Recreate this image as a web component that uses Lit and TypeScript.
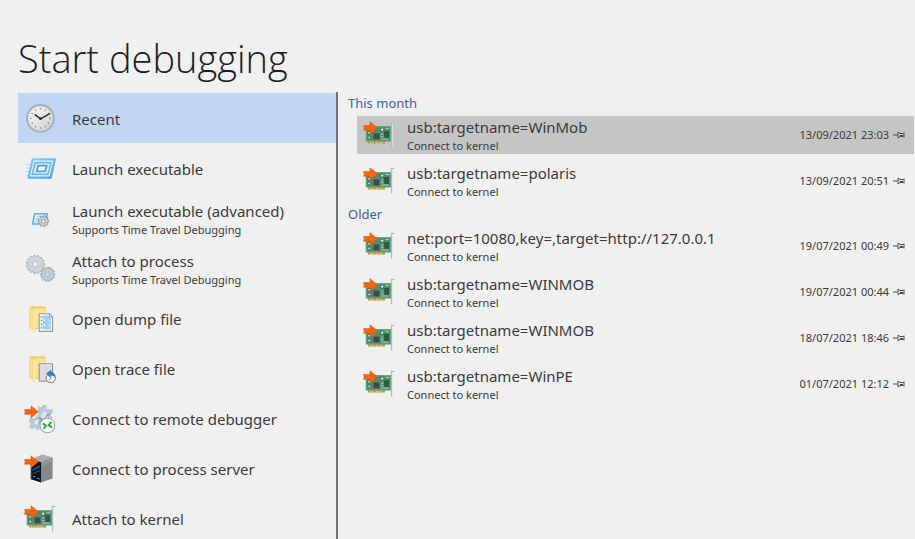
import { LitElement, html, svg, css, nothing } from "lit";
import { customElement, property, state } from "lit/decorators.js";
import { classMap } from "lit/directives/class-map.js";

type IconName =
  | "clock" | "launch" | "launch-adv" | "gears" | "dump" | "trace" | "remote" | "server" | "kernel";

const gearPath = (cx: number, cy: number, outer: number, inner: number, teeth: number) => {
  const pts: string[] = [];
  const step = (Math.PI * 2) / teeth;
  for (let i = 0; i < teeth; i++) {
    const a = i * step;
    for (const [f, r] of [[-0.3, inner], [-0.18, outer], [0.18, outer], [0.3, inner]]) {
      pts.push(`${(cx + Math.cos(a + f * step) * r).toFixed(2)},${(cy + Math.sin(a + f * step) * r).toFixed(2)}`);
    }
  }
  return `M${pts.join("L")}Z`;
};

const arrow = svg`<path d="M0.5 6.6H7V2.8L14.3 8.8L7 14.9V11.2H0.5L1.3 8.9Z" fill="#f7630c" stroke="#dd5716" stroke-width=".6"/>`;

const folder = svg`
  <path d="M5 4.5L7 3.2H20.5Q21.6 3.2 21.6 4.5V26H9Z" fill="#f0cd6a"/>
  <path d="M10.5 5.4H21V25H10.5Z" fill="#fbe391"/>
  <path d="M5 4L11.2 7.6V30.2L8.6 28.6V26.8L5 25Z" fill="#fbdc83"/>
  <path d="M9.5 6.6L11.2 7.6V30L9.5 29Z" fill="#fdeaae"/>`;

const ticks = Array.from({ length: 12 }, (_, i) => i * 30);

const icons: Record<IconName, unknown> = {
  clock: svg`
    <defs><linearGradient id="face" x1="0" y1="0" x2="1" y2="1">
      <stop offset="0" stop-color="#fafafa"/><stop offset=".5" stop-color="#e6e6e6"/><stop offset="1" stop-color="#c9c9c9"/>
    </linearGradient></defs>
    <circle cx="16.4" cy="15.4" r="13.3" fill="url(#face)" stroke="#a5b2b9" stroke-width="2.2"/>
    <circle cx="16.4" cy="15.4" r="12.1" fill="none" stroke="#d3d8da" stroke-width=".8"/>
    ${ticks.map((a) => svg`<path d="M16.4 5.1V6.7" stroke="#777" stroke-width=".9" transform="rotate(${a} 16.4 15.4)"/>`)}
    <path d="M10.6 11.4L16.6 15.9L26.2 10.3" fill="none" stroke="#2c2c2c" stroke-width="1.4"/>
    <circle cx="16.5" cy="15.7" r="1.4" fill="#2c2c2c"/>`,
  launch: svg`
    <defs><linearGradient id="pane" x1="0" y1="0" x2="1" y2="1">
      <stop offset="0" stop-color="#8fd0f8"/><stop offset="1" stop-color="#4a9de0"/>
    </linearGradient></defs>
    <path d="M2.5 11.5H7M2 15H7M1.5 18.5H6M1 22H5" stroke="#b4daf3" stroke-width="1.2"/>
    <path d="M8.6 6.4H30.8L26.6 24.6H4.6Z" fill="#e6f4fd" stroke="url(#pane)" stroke-width="2.3" stroke-linejoin="round"/>
    <path d="M11 9.6H27L24.2 21.4H8.2Z" fill="#c9e6fa" stroke="#70baf0" stroke-width="1.6" stroke-linejoin="round"/>
    <path d="M14.2 12.8H22.6L21.2 18.2H12.8Z" fill="#fff" stroke="#4a9de0" stroke-width="1.6"/>`,
  "launch-adv": svg`
    <path d="M10.6 10.8H23.4L21 21H8.6Z" fill="#d9effd" stroke="#62b2ee" stroke-width="1.6" stroke-linejoin="round"/>
    <path d="M13.6 13.4H20L19 18.4H12.4Z" fill="#f5fbff" stroke="#93ccf4" stroke-width=".9"/>
    <path d="${gearPath(19.4, 18.2, 5.6, 4.4, 9)}" fill="#c9ced1" stroke="#8c9195" stroke-width=".8"/>
    <circle cx="19.4" cy="18.2" r="2" fill="#eee" stroke="#8c9195" stroke-width=".8"/>`,
  gears: svg`
    <path d="${gearPath(11.4, 11.4, 9.2, 7.6, 15)}" fill="#d3dce3" stroke="#a4abb1" stroke-width=".9"/>
    <circle cx="11.4" cy="11.4" r="5.2" fill="none" stroke="#c2ccd5" stroke-width="1"/>
    <circle cx="11.4" cy="11.4" r="2.8" fill="#f0f0f0" stroke="#a9b0b5" stroke-width=".9"/>
    <path d="${gearPath(23.7, 21.3, 7.2, 5.8, 14)}" fill="#ccd4da" stroke="#9ba1a6" stroke-width=".9"/>
    <circle cx="23.7" cy="21.3" r="3.8" fill="none" stroke="#b3bcc4" stroke-width=".9"/>
    <circle cx="23.7" cy="21.3" r="1.7" fill="#f0f0f0" stroke="#9ba1a6" stroke-width=".8"/>`,
  dump: svg`
    ${folder}
    <path d="M15.2 10.8H25.6L28.6 13.8V28.4H15.2Z" fill="#f6f8f9" stroke="#979a9c" stroke-width="1.1" stroke-linejoin="round"/>
    <path d="M19 12.4H24.5L27 15V26.8H19Z" fill="#9fd0f4"/>
    <path d="M25.4 10.8V14H28.6Z" fill="#fff" stroke="#979a9c" stroke-width=".9"/>
    <path d="M17.6 13V27" stroke="#69b2ea" stroke-width="1.8" stroke-dasharray="2 1.6"/>
    <path d="M20.4 16.5V27" stroke="#fff" stroke-width="1.4" stroke-dasharray="1.6 3"/>
    <path d="M25.6 17V27" stroke="#d8ecfa" stroke-width="1.4" stroke-dasharray="1.6 3"/>`,
  trace: svg`
    ${folder}
    <rect x="15.2" y="10.8" width="13.4" height="17.4" rx=".6" fill="#dcdcdc" stroke="#999" stroke-width="1.2"/>
    <path d="M16.3 12H27.5" stroke="#f3f3f3" stroke-width=".8"/>
    <circle cx="26.8" cy="25" r="4.6" fill="#f6f6f6" stroke="#92979b" stroke-width="1.3"/>
    <path d="M26.9 22V25.4L24.8 27" fill="none" stroke="#777" stroke-width=".9"/>
    <path d="M22.2 20.2L27.4 16.8L27 18.6Q31.2 19.6 31.2 24.4Q28.8 22.2 26.2 22.6L25.7 24.6Z" fill="#2c83c6"/>`,
  remote: svg`
    <path d="M14 3L17.5 4.6L19 1.8L22.6 2.6L22.4 6L26 6.6L28.4 5.8L29 9.4L26.4 11.4L28.6 14.6L26 18H20L18.6 21L16 22.6L16.4 26L12.6 27L11 24.4L7.6 26L5 23.4L6.8 20.4L4.6 18.4L6.4 15L10 15.6L14 12Z" fill="#b5c7d9"/>
    <path d="M20 7.4Q23.4 8.4 22.6 12L19 15.6L16.4 14Z" fill="#dde5ec"/>
    <path d="M11 17.6L14.6 17L13.6 21.4L10 21Z" fill="#e4eaef"/>
    <path d="M14.4 14.4L18 16.4L15.6 20.4M22.6 12.6L25.6 11" fill="none" stroke="#8199ae" stroke-width="1.6"/>
    ${arrow}
    <circle cx="23.4" cy="22.5" r="7.3" fill="#fff" stroke="#a3a6a8" stroke-width="1.1"/>
    <path d="M18.8 20.4L22 22.8L19.6 26M27.4 18.8L24.8 22L28 24.6" fill="none" stroke="#2eac3a" stroke-width="2"/>`,
  server: svg`
    <path d="M7 6L18.5 1.6L28.6 4.4L17 9.4Z" fill="#a9acb0"/>
    <path d="M17 9.2L28.6 4.4V25.4L17 29.6Z" fill="#84888d"/>
    <path d="M18 9.8L28.6 5.4V8L18 13Z" fill="#94989c"/>
    <path d="M6.8 6L17 9.2V29.6L6.8 26.2Z" fill="#0c1119"/>
    <path d="M8 16L15.8 12V14.4L8 18.2ZM8 20L15.8 17V18.4L8 21Z" fill="#174f82"/>
    <path d="M9 23.2L11.5 24M13 25.2L15.6 26" stroke="#2cb6cf" stroke-width="1.1"/>
    <path d="M7.4 6V26.2" stroke="#444b54" stroke-width=".7"/>
    ${arrow}`,
  kernel: svg`
    <path d="M5 22H22V24.6H5Z" fill="#cf983c"/>
    <path d="M7.5 22V24.6M10 22V24.6M13.5 21V25M16 22V24.6M18.5 22V24.6" stroke="#f0e0b0" stroke-width=".7"/>
    <path d="M2.8 7.2H28V22.4H2.8Z" fill="#4a9070"/>
    <path d="M3.4 7.8H27.4V21.8H3.4Z" fill="none" stroke="#68ad88" stroke-width=".7"/>
    <rect x="10.2" y="14.2" width="6.4" height="6.4" fill="#42474a" stroke="#687370" stroke-width=".7"/>
    <rect x="21.7" y="12.6" width="4" height="6" fill="#37544a" stroke="#254c39" stroke-width=".6"/>
    <circle cx="6" cy="13.8" r="1.5" fill="#d0dbd4" stroke="#315b46" stroke-width=".7"/>
    <circle cx="6.2" cy="18.4" r="1.5" fill="#c8d3cc" stroke="#315b46" stroke-width=".7"/>
    <circle cx="19.2" cy="10.6" r="1.7" fill="#e3e9e5" stroke="#315b46" stroke-width=".8"/>
    <path d="M18 15.2H20.4M18 17.6H20.4M18 20H25.6M22.4 9.6H26.2" stroke="#a6cfb6" stroke-width="1"/>
    <path d="M31.4 3.4H28.5V28.4" fill="none" stroke="#b4babb" stroke-width="1.2"/>
    <path d="M29.5 4.4V27.4" stroke="#e2e5e5" stroke-width=".8"/>
    ${arrow}`,
};

@customElement("app-icon")
export class AppIcon extends LitElement {
  @property() name: IconName = "clock";

  static styles = css`
    :host { display: block; flex: none; width: 32px; height: 32px; }
    .icon { display: block; width: 100%; height: 100%; }
  `;

  render() {
    return html`<svg class="icon" viewBox="0 0 32 32" aria-hidden="true">${icons[this.name]}</svg>`;
  }
}

interface Action { icon: IconName; label: string; note?: string }
interface Target { name: string; when: string }

const actions: Action[] = [
  { icon: "clock", label: "Recent" },
  { icon: "launch", label: "Launch executable" },
  { icon: "launch-adv", label: "Launch executable (advanced)", note: "Supports Time Travel Debugging" },
  { icon: "gears", label: "Attach to process", note: "Supports Time Travel Debugging" },
  { icon: "dump", label: "Open dump file" },
  { icon: "trace", label: "Open trace file" },
  { icon: "remote", label: "Connect to remote debugger" },
  { icon: "server", label: "Connect to process server" },
  { icon: "kernel", label: "Attach to kernel" },
];

const groups: { title: string; targets: Target[] }[] = [
  {
    title: "This month",
    targets: [
      { name: "usb:targetname=WinMob", when: "13/09/2021 23:03" },
      { name: "usb:targetname=polaris", when: "13/09/2021 20:51" },
    ],
  },
  {
    title: "Older",
    targets: [
      { name: "net:port=10080,key=,target=http://127.0.0.1", when: "19/07/2021 00:49" },
      { name: "usb:targetname=WINMOB", when: "19/07/2021 00:44" },
      { name: "usb:targetname=WINMOB", when: "18/07/2021 18:46" },
      { name: "usb:targetname=WinPE", when: "01/07/2021 12:12" },
    ],
  },
];

@customElement("app-root")
export class AppRoot extends LitElement {
  @state() private action = 0;
  @state() private target = groups[0].targets[0];

  static styles = css`
    :host {
      display: flex;
      flex-direction: column;
      height: 100vh;
      overflow: hidden;
      background: #f0f0f0;
      color: #3b3b3b;
      font-family: "Noto Sans", "Open Sans", sans-serif;
      font-size: 15px;
      line-height: 20px;
    }
    * { box-sizing: border-box; }
    button {
      border: 0;
      margin: 0;
      background: none;
      color: inherit;
      font: inherit;
      text-align: left;
    }
    .title {
      margin: 0;
      padding: 32px 18px 8px;
      font-family: "Open Sans", "Noto Sans", sans-serif;
      font-size: 38px;
      line-height: 52px;
      font-weight: 300;
      color: #1e1e1e;
    }
    .body { display: flex; flex: 1; min-height: 0; }
    .actions {
      flex: none;
      width: 320px;
      margin-left: 18px;
      padding-top: 1px;
      border-right: 2px solid #737373;
      overflow: hidden;
    }
    .action {
      display: flex;
      align-items: center;
      gap: 16px;
      width: 100%;
      height: 50px;
      padding: 2px 6px 0;
    }
    .action.selected { background: #c2d5f2; }
    .label, .note { display: block; white-space: nowrap; }
    .noted { padding-top: 1px; }
    .note { padding-top: 1px; font-size: 11px; line-height: 16px; }
    .recent { flex: 1; min-width: 0; padding: 1px 1px 0 10px; }
    .group {
      margin: 0;
      padding-top: 2px;
      font-size: 13px;
      line-height: 17px;
      font-weight: 400;
      color: #44619d;
    }
    .list { list-style: none; margin: 0; padding: 0 0 0 9px; }
    .row { display: flex; height: 46px; padding: 4px 0; }
    .entry {
      display: flex;
      align-items: center;
      width: 100%;
      padding-right: 9px;
    }
    .entry.selected { background: #c5c5c5; }
    .open {
      display: flex;
      flex: 1;
      align-items: center;
      gap: 12px;
      min-width: 0;
      height: 100%;
      padding: 0 0 0 6px;
    }
    .text { flex: 1; min-width: 0; }
    .when { font-size: 11px; line-height: 16px; white-space: nowrap; }
    .pin { display: block; padding: 0; margin-left: 4px; width: 12px; height: 12px; }
    .pin-icon { display: block; width: 12px; height: 12px; }
  `;

  private renderAction(a: Action, i: number) {
    return html`
      <button class=${classMap({ action: true, selected: i === this.action })} @click=${() => (this.action = i)}>
        <app-icon .name=${a.icon}></app-icon>
        <span class=${classMap({ text: true, noted: !!a.note })}>
          <span class="label">${a.label}</span>
          ${a.note ? html`<span class="note">${a.note}</span>` : nothing}
        </span>
      </button>`;
  }

  private renderTarget(t: Target) {
    return html`
      <li class="row">
        <div class=${classMap({ entry: true, selected: t === this.target })}>
          <button class="open" @click=${() => (this.target = t)}>
            <app-icon .name=${"kernel"}></app-icon>
            <span class="text noted">
              <span class="label">${t.name}</span>
              <span class="note">Connect to kernel</span>
            </span>
            <span class="when">${t.when}</span>
          </button>
          <button class="pin" aria-label="Pin">
            <svg class="pin-icon" viewBox="0 0 12 12" aria-hidden="true">
              <path d="M0 6H4.5M5 3V9L7 7.5H10.5M5 3L7 4.5H10.5M11 3.5V8.5M7 6.5H10" fill="none" stroke="#4a4a4a" />
            </svg>
          </button>
        </div>
      </li>`;
  }

  render() {
    return html`
      <h1 class="title">Start debugging</h1>
      <div class="body">
        <nav class="actions">${actions.map((a, i) => this.renderAction(a, i))}</nav>
        <main class="recent">
          ${groups.map((g) => html`
            <h2 class="group">${g.title}</h2>
            <ul class="list">${g.targets.map((t) => this.renderTarget(t))}</ul>`)}
        </main>
      </div>`;
  }
}
